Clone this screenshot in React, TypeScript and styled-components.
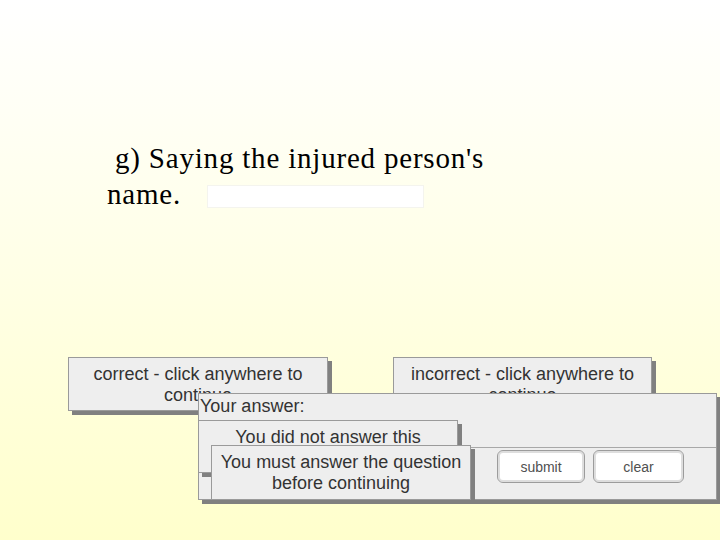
import styled, {createGlobalStyle} from "styled-components";

const GlobalStyle = createGlobalStyle`
    html, body {
        margin: 0;
        padding: 0;
    }
    body {
        background: linear-gradient(180deg, #ffffff 0%, #ffffee 35%, #ffffcc 100%);
        min-height: 540px;
    }
`;

const Stage = styled.div`
    position: relative;
    width: 720px;
    height: 540px;
    overflow: hidden;
`;

const Question = styled.div`
    padding: 140px 0 0 107px;
    font-family: "Liberation Serif", "Times New Roman", serif;
    font-size: 29px;
    letter-spacing: 0.8px;
    line-height: 36px;
    color: #000;
`;

const QuestionLine = styled.div`
    display: flex;
    align-items: flex-start;
    height: 36px;
    white-space: pre;
`;

const AnswerField = styled.input`
    width: 215px;
    height: 21px;
    margin: 10px 0 0 27px;
    padding: 0;
    border: none;
    outline: none;
    background: #ffffff;
    box-shadow: 0 0 0 1px #f4f4ee;
`;

const FeedbackRow = styled.div`
    display: flex;
    gap: 65px;
    margin: 145px 0 0 68px;
`;

// grey note box with the hard drop shadow
const Note = styled.div<{ $width: number; $height: number }>`
    box-sizing: border-box;
    width: ${p => p.$width}px;
    height: ${p => p.$height}px;
    padding: 6px 2px 0;
    overflow: hidden;
    background: #eeeeee;
    border: 1px solid #9a9a9a;
    box-shadow: 4px 4px 0 #808080;
    font-family: "Liberation Sans", Arial, sans-serif;
    font-size: 18px;
    line-height: 21px;
    color: #333333;
    text-align: center;
`;

const AnswerPanel = styled.div`
    position: absolute;
    left: 198px;
    top: 393px;
    box-sizing: border-box;
    width: 519px;
    height: 107px;
    display: flex;
    flex-direction: column;
    background: #eeeeee;
    border: 1px solid #9a9a9a;
    box-shadow: 4px 4px 0 #808080;
    font-family: "Liberation Sans", Arial, sans-serif;
    color: #333333;
`;

const PanelHeader = styled.div`
    height: 53px;
    padding: 0 0 0 1px;
    font-size: 18px;
    line-height: 25px;
`;

const PanelFooter = styled.div`
    flex: 1;
    display: flex;
    justify-content: flex-end;
    align-items: flex-start;
    gap: 8px;
    padding: 2px 32px 0 0;
    border-top: 1px solid #a8a8a8;
`;

const ActionButton = styled.button`
    box-sizing: border-box;
    height: 33px;
    width: ${(p: { $width: number }) => p.$width}px;
    padding: 0;
    background: #ffffff;
    border: 1px solid #9c9c9c;
    border-radius: 6px;
    box-shadow: inset 0 0 0 2px #dedede;
    font-family: "Liberation Sans", Arial, sans-serif;
    font-size: 14px;
    color: #505050;
    cursor: pointer;
`;

const Popup = styled.div<{ $left: number; $top: number }>`
    position: absolute;
    left: ${p => p.$left}px;
    top: ${p => p.$top}px;
`;

export default function App() {
  return (
      <Stage>
        <GlobalStyle/>
        <Question>
          <QuestionLine>{" g) Saying the injured person's"}</QuestionLine>
          <QuestionLine>
            name.
            <AnswerField type="text"/>
          </QuestionLine>
        </Question>

        <FeedbackRow>
          <Note $width={260} $height={54}>correct - click anywhere to continue</Note>
          <Note $width={259} $height={54}>incorrect - click anywhere to continue</Note>
        </FeedbackRow>

        <AnswerPanel>
          <PanelHeader>Your answer:</PanelHeader>
          <PanelFooter>
            <ActionButton $width={88}>submit</ActionButton>
            <ActionButton $width={91}>clear</ActionButton>
          </PanelFooter>

          <Popup $left={-1} $top={26}>
            <Note $width={260} $height={53}>You did not answer this question</Note>
          </Popup>
          <Popup $left={12} $top={51}>
            <Note $width={260} $height={55}>You must answer the question before continuing</Note>
          </Popup>
        </AnswerPanel>
      </Stage>
  );
}
